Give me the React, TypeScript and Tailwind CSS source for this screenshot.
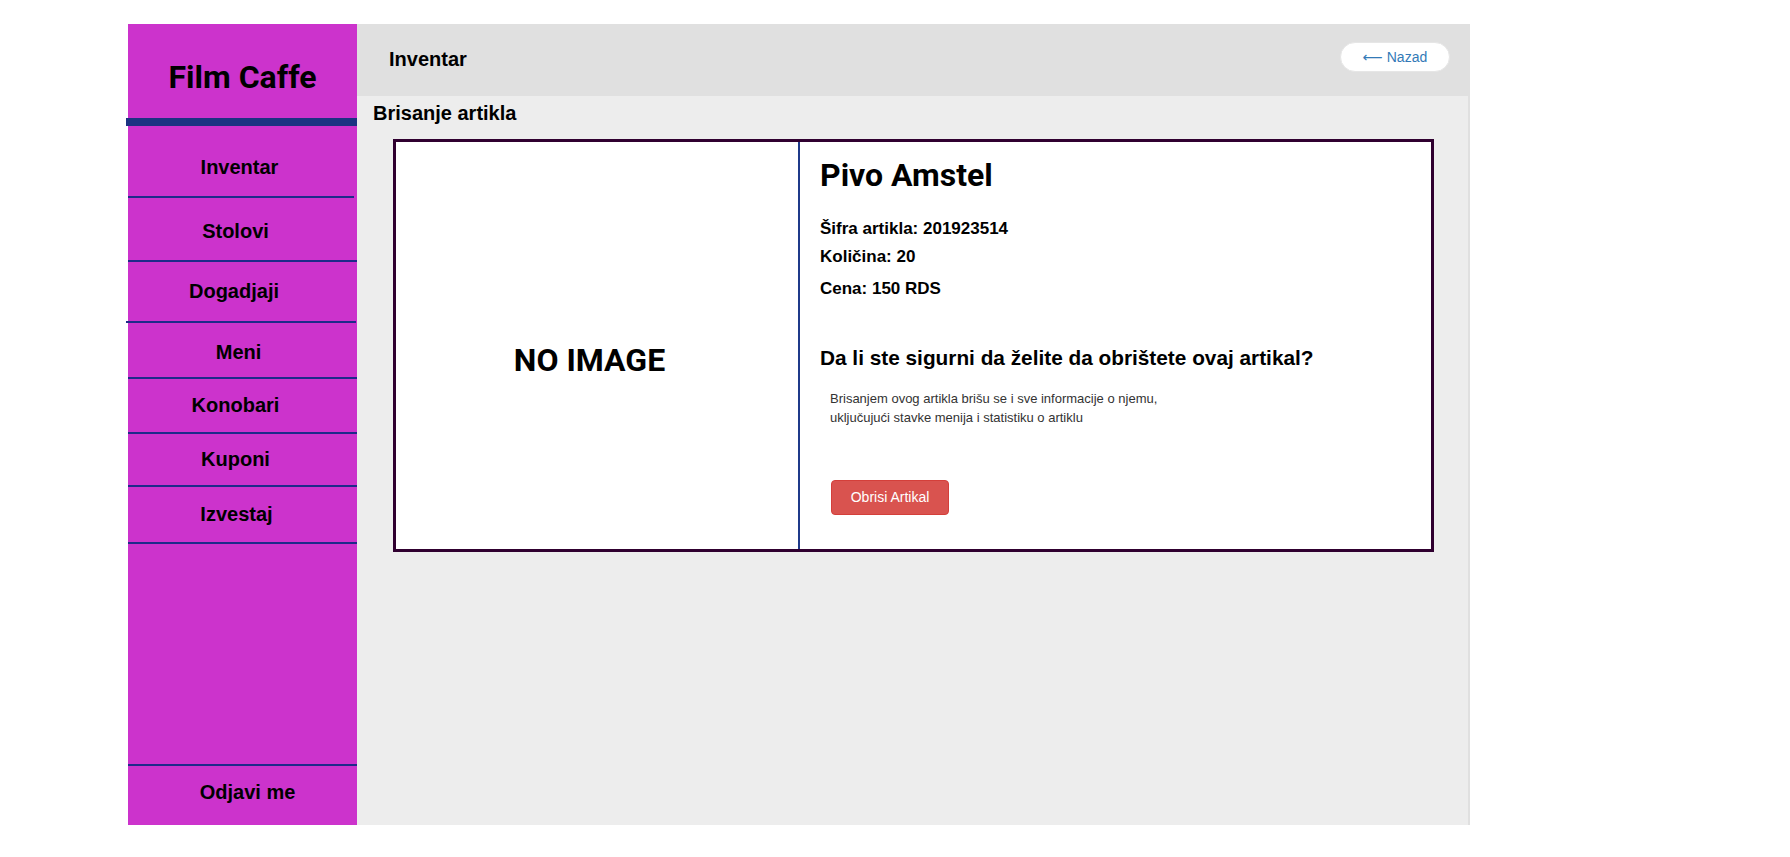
const navItems = [
  { label: 'Inventar', cls: 'h-[72px] pt-[29px] pl-[11px] pr-[14px] border-b-2 w-[226px]' },
  { label: 'Stolovi', cls: 'h-[64px] pt-[21px] pr-[14px] border-b-2' },
  { label: 'Dogadjaji', cls: 'h-[61px] pt-[17px] pr-[14px] border-b-2 -ml-[2px] w-[230px]' },
  { label: 'Meni', cls: 'h-[56px] pt-[17px] pl-[6px] pr-[14px] border-b-2' },
  { label: 'Konobari', cls: 'h-[55px] pt-[14px] pr-[14px] border-b-2' },
  { label: 'Kuponi', cls: 'h-[53px] pt-[13px] pr-[14px] border-b-2' },
  { label: 'Izvestaj', cls: 'h-[57px] pt-[15px] pr-[12px] border-b-2' },
]

export default function App() {
  return (
    <div className="min-h-screen bg-white font-['Liberation_Sans',Arial,sans-serif] text-black">
      <div className="ml-[128px] pt-[24px] flex w-[1342px]">
        {/* Sidebar */}
        <aside className="w-[229px] h-[801px] bg-[#cc33cc] flex flex-col">
          <div className="h-[94px] pt-[34px] text-center">
            <h1 className="font-['Roboto',sans-serif] font-bold text-[32px] leading-[38px]">Film Caffe</h1>
          </div>
          <div className="h-[8px] -ml-[2px] w-[232px] bg-[#1b3382]" />
          {navItems.map((item) => (
            <div
              key={item.label}
              className={`${item.cls} border-[#1e2a8a] text-center text-[20px] leading-[24px] font-bold cursor-pointer`}
            >
              {item.label}
            </div>
          ))}
          <div className="flex-1" />
          <div className="h-[61px] pt-[14px] pl-[10px] border-t-2 border-[#1e2a8a] text-center text-[20px] leading-[24px] font-bold cursor-pointer">
            Odjavi me
          </div>
        </aside>

        {/* Main */}
        <main className="flex-1 h-[801px] flex flex-col">
          <header className="h-[72px] bg-[#e0e0e0] flex items-start justify-between pl-[32px] pr-[20px]">
            <h2 className="mt-[23px] text-[20px] leading-[24px] font-bold">Inventar</h2>
            <button className="mt-[18px] w-[110px] h-[30px] rounded-full bg-white border border-[#e6e6e6] text-[14px] text-[#337ab7] font-['Liberation_Sans','DejaVu_Sans',sans-serif]">
              ⟵ Nazad
            </button>
          </header>

          <section className="flex-1 bg-[#ededed] border-r-2 border-[#e0e0e0]">
            <h3 className="mt-[5px] pl-[16px] text-[20px] leading-[24px] font-bold">Brisanje artikla</h3>

            <div className="mt-[14px] ml-[36px] w-[1041px] h-[413px] border-[3px] border-[#300030] bg-white flex">
              <div className="w-[404px] border-r-2 border-[#1f3a8a] flex justify-center pt-[199px] pr-[15px]">
                <span className="font-['Roboto',sans-serif] font-bold text-[32px] leading-[38px]">NO IMAGE</span>
              </div>

              <div className="flex-1 pl-[20px] pt-[14px]">
                <h2 className="font-['Roboto',sans-serif] font-bold text-[32px] leading-[38px]">Pivo Amstel</h2>
                <p className="mt-[25px] text-[17px] leading-[20px] font-bold">Šifra artikla: 201923514</p>
                <p className="mt-[8px] text-[17px] leading-[20px] font-bold">Količina: 20</p>
                <p className="mt-[12px] text-[17px] leading-[20px] font-bold">Cena: 150 RDS</p>

                <h3 className="mt-[47px] text-[20.8px] leading-[24px] font-bold">
                  Da li ste sigurni da želite da obrištete ovaj artikal?
                </h3>
                <p className="mt-[19px] ml-[10px] text-[13px] leading-[19px] text-[#333]">
                  Brisanjem ovog artikla brišu se i sve informacije o njemu,
                  <br />
                  uključujući stavke menija i statistiku o artiklu
                </p>

                <button className="mt-[53px] ml-[11px] w-[118px] h-[35px] rounded-[4px] bg-[#d9534f] border border-[#d43f3a] text-white text-[14px]">
                  Obrisi Artikal
                </button>
              </div>
            </div>
          </section>
        </main>
      </div>
    </div>
  )
}
